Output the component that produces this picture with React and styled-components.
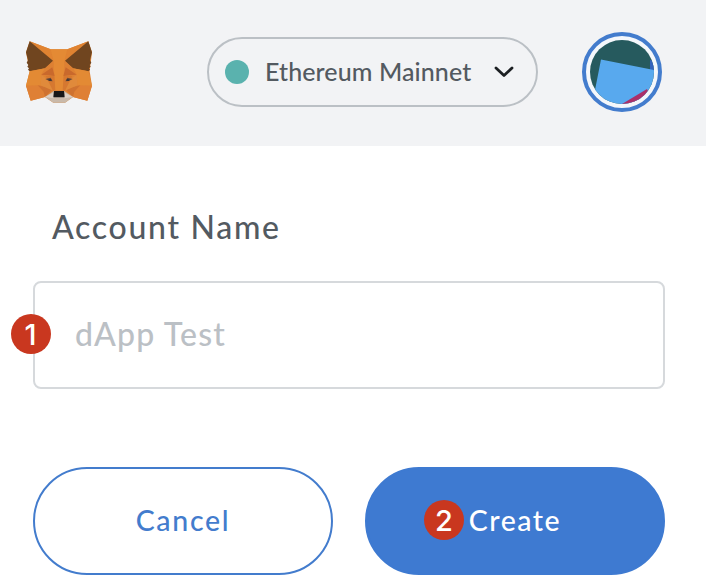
import React from 'react';
import styled, { createGlobalStyle } from 'styled-components';

const GlobalStyle = createGlobalStyle`
  * { box-sizing: border-box; }
  body {
    margin: 0;
    background: #fff;
    font-family: Lato, "Liberation Sans", sans-serif;
    font-weight: 500;
  }
`;

const Page = styled.div`
  width: 706px;
  height: 588px;
  overflow: hidden;
`;

const Header = styled.header`
  height: 146px;
  padding: 0 44px 2px 25px;
  display: flex;
  align-items: center;
  background: #f2f3f5;
`;

const FoxLogo = styled.svg`
  width: 68px;
  height: 64px;
  flex: none;
`;

const NetworkPicker = styled.button`
  width: 331px;
  height: 70px;
  margin: 0 0 0 114px;
  padding: 0 22px 2px 16px;
  display: flex;
  align-items: center;
  border: 2px solid #bbc0c5;
  border-radius: 35px;
  background: none;
  color: #535a61;
  font: inherit;
`;

const NetworkDot = styled.span`
  width: 24px;
  height: 24px;
  margin: 2px 16px 0 0;
  border-radius: 50%;
  background: #5ab2ae;
`;

const Label = styled.span`
  font-size: ${(p) => p.$size}px;
  line-height: 1.2;
  letter-spacing: ${(p) => p.$spacing || 0}px;
  white-space: nowrap;
`;

const Chevron = styled.svg`
  width: 20px;
  height: 12px;
  margin: 2px 0 0 auto;
`;

const Avatar = styled.div`
  width: 80px;
  height: 80px;
  margin-left: 44px;
  flex: none;
  padding: 4px;
  border: 4px solid #437ccd;
  border-radius: 50%;
  background: #f4f7fb;
  svg { display: block; width: 64px; height: 64px; }
`;

const Form = styled.main`
  padding: 62px 41px 0 33px;
`;

const FieldLabel = styled.label`
  display: flex;
  align-items: center;
  height: 40px;
  padding: 0 0 2px 19px;
  color: #535a61;
`;

const Field = styled.div`
  position: relative;
  display: flex;
  align-items: center;
  height: 108px;
  margin-top: 33px;
  padding: 0 0 1px 40px;
  border: 2px solid #d6d9dc;
  border-radius: 8px;
  color: #bbc0c5;
`;

const Actions = styled.div`
  display: grid;
  grid-template-columns: 300px 300px;
  column-gap: 32px;
  margin-top: 78px;
`;

const Button = styled.button`
  position: relative;
  height: 108px;
  padding: 0 0 2px;
  border: 2px solid ${(p) => (p.$primary ? '#3e7ad1' : '#437ccd')};
  border-radius: 54px;
  background: ${(p) => (p.$primary ? '#3e7ad1' : '#fff')};
  color: ${(p) => (p.$primary ? '#fff' : '#437ccd')};
  font: inherit;
`;

const StepBadge = styled.span`
  position: absolute;
  left: ${(p) => p.$left}px;
  top: ${(p) => p.$top}px;
  width: 40px;
  height: 40px;
  display: flex;
  align-items: center;
  justify-content: center;
  padding-top: 1px;
  border-radius: 50%;
  background: #c9371f;
  color: #fff;
  font: 500 29px/40px Inter, sans-serif;
`;

function Fox() {
  return (
    <FoxLogo viewBox="30 30 204 192" aria-label="MetaMask">
      <path fill="#de8234" d="M44 34 107 58H157L220 34 231 67 224 124 231 167 217 212 174 201 150 218H115L90 201 47 212 33 167 44 124 33 67Z" />
      <path fill="#e08331" d="M44 34 107 58 116 93ZM220 34 157 58 148 93Z" />
      <path fill="#e48a34" d="M107 58H157L148 93 144 180H120L116 93Z" />
      <path fill="#70451f" d="M44 34 114 92 90 115 44 124 39 119 42 115 37 110 40 105 35 98 39 91 33 67ZM220 34 150 92 174 115 220 124 225 119 222 115 227 110 224 105 229 98 225 91 231 67Z" />
      <path fill="#e38a34" d="M44 124 90 115 79 134 77 166 33 167ZM220 124 174 115 185 134 187 166 231 167Z" />
      <path fill="#dd8033" d="M90 115 116 93 112 114 79 134ZM174 115 148 93 152 114 185 134Z" />
      <path fill="#c9692c" d="M79 134 112 112 119 138 100 136ZM185 134 152 112 145 138 164 136Z" />
      <path fill="#df8035" d="M33 167H77L90 201 47 212ZM231 167H187L174 201 217 212Z" />
      <path fill="#cf7230" d="M68 166 114 176 90 201 86 185ZM196 166 150 176 174 201 178 185Z" />
      <path fill="#e08a3b" d="M79 134 77 166 114 182 110 158ZM185 134 187 166 150 182 154 158Z" />
      <path fill="#d67830" d="M92 138 118 138 121 181 114 182ZM172 138 146 138 143 181 150 182Z" />
      <path fill="#694b3b" d="M91 147 107 143 113 154 103 153ZM173 147 157 143 151 154 161 153Z" />
      <path fill="#3c3436" d="M99 149 108 147 110 152 103 153ZM165 149 156 147 154 152 161 153Z" />
      <path fill="#c9b9aa" d="M90 201 116 183H148L174 201 150 218H115Z" />
      <path fill="#ddd0c5" d="M90 201 114 188 117 205ZM174 201 150 188 147 205Z" />
      <path fill="#171718" d="M117 183H147L149 202H115Z" />
    </FoxLogo>
  );
}

export default function App() {
  return (
    <>
      <GlobalStyle />
      <Page>
        <Header>
          <Fox />
          <NetworkPicker>
            <NetworkDot />
            <Label $size={25} $spacing={0.1}>Ethereum Mainnet</Label>
            <Chevron viewBox="0 0 20 12" fill="none">
              <path d="M2 2 10 9.5 18 2" stroke="#1c1f22" strokeWidth="2.8" strokeLinecap="round" strokeLinejoin="round" />
            </Chevron>
          </NetworkPicker>
          <Avatar>
            <svg viewBox="0 0 64 64">
              <defs>
                <clipPath id="avatarClip"><circle cx="32" cy="32" r="32" /></clipPath>
              </defs>
              <g clipPath="url(#avatarClip)">
                <rect width="64" height="64" fill="#265a5e" />
                <path d="M60 20 64 21V31L60 30Z" fill="#3463bd" />
                <path d="M11 19.5 64 30V64H0L5 50Z" fill="#58a9ee" />
                <path d="M32 64 57 49 64 64Z" fill="#ab3069" />
              </g>
            </svg>
          </Avatar>
        </Header>
        <Form>
          <FieldLabel><Label $size={32} $spacing={1.7}>Account Name</Label></FieldLabel>
          <Field>
            <StepBadge $left={-24.5} $top={31}>1</StepBadge>
            <Label $size={32} $spacing={1.2}>dApp Test</Label>
          </Field>
          <Actions>
            <Button><Label $size={28.5} $spacing={1.7}>Cancel</Label></Button>
            <Button $primary>
              <StepBadge $left={57} $top={31}>2</StepBadge>
              <Label $size={28.5} $spacing={1.5}>Create</Label>
            </Button>
          </Actions>
        </Form>
      </Page>
    </>
  );
}
